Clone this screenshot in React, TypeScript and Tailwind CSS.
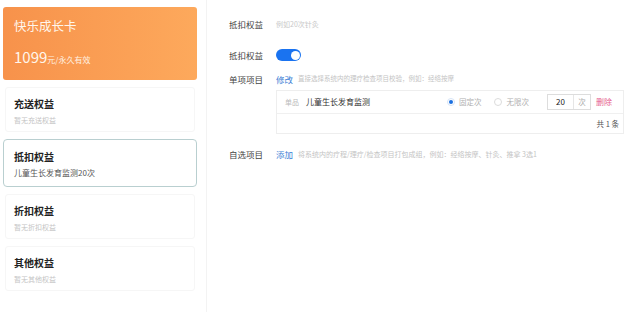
import React from 'react';

interface Benefit {
    title: string;
    desc: string;
    active?: boolean;
}

const benefits: Benefit[] = [
    { title: '充送权益', desc: '暂无充送权益' },
    { title: '抵扣权益', desc: '儿童生长发育监测20次', active: true },
    { title: '折扣权益', desc: '暂无折扣权益' },
    { title: '其他权益', desc: '暂无其他权益' },
];

const BenefitCard = ({ title, desc, active }: Benefit) => (
    <div
        className={
            active
                ? 'flex h-[48px] flex-col rounded-[4px] border border-[#b9cfd0] pl-[10px] pt-[9px]'
                : 'mx-[2px] flex h-[45px] flex-col rounded-[3px] border border-[#f6f6f6] pl-[8px] pt-[8px]'
        }
    >
        <div className="text-[10px] leading-[16px] font-bold text-[#222]">{title}</div>
        <div className={active ? 'mt-[1px] text-[8px] leading-[13px] text-[#555]' : 'mt-[2px] text-[7px] leading-[13px] text-[#c4c4c4]'}>
            {desc}
        </div>
    </div>
);

const Label = ({ children }: { children: React.ReactNode }) => (
    <div className="w-[47px] shrink-0 text-[8.5px] text-[#444]">{children}</div>
);

export default function App() {
    return (
        <div className="flex h-[312px] w-[640px] overflow-hidden bg-white font-['Noto_Sans_CJK_SC',sans-serif]">
            <aside className="flex w-[207px] shrink-0 flex-col gap-[7px] border-r border-[#f3f3f3] pt-[7px] pl-[3px] pr-[9px]">
                <div className="flex h-[73px] flex-col rounded-[3px] bg-gradient-to-r from-[#f7924b] to-[#fda95c] px-[11px] pt-[10px] text-white">
                    <div className="text-[12.5px] leading-[18px] text-[#fff6ec]">快乐成长卡</div>
                    <div className="mt-[12px] flex items-baseline">
                        <span className="text-[15px] leading-[20px] text-[#fff6ec]">1099</span>
                        <span className="text-[8px] text-[#fff1e2]">元/永久有效</span>
                    </div>
                </div>
                {benefits.map((b) => (
                    <BenefitCard key={b.title} {...b} />
                ))}
            </aside>

            <main className="flex flex-1 flex-col pl-[22px]">
                <div className="mt-[16px] flex h-[16px] items-center">
                    <Label>抵扣权益</Label>
                    <span className="text-[7px] text-[#c8c8c8]">例如20次针灸</span>
                </div>

                <div className="mt-[15px] flex h-[16px] items-center">
                    <Label>抵扣权益</Label>
                    <div className="flex h-[12px] w-[25px] items-center justify-end rounded-full bg-[#1a73f0] pr-[1.5px]">
                        <div className="h-[9px] w-[9px] rounded-full bg-white" />
                    </div>
                </div>

                <div className="mt-[8px] flex h-[16px] items-center">
                    <Label>单项项目</Label>
                    <span className="mr-[5px] text-[8.5px] text-[#3d7fd6]">修改</span>
                    <span className="text-[6.5px] text-[#c4c4c4]">直接选择系统内的理疗检查项目校验，例如：经络按摩</span>
                </div>

                <div className="mt-[3px] ml-[47px] w-[348px] border border-[#eeeeee]">
                    <div className="flex h-[23px] items-center border-b border-[#f0f0f0] pl-[8px]">
                        <span className="mr-[7px] text-[7px] text-[#bbb]">单品</span>
                        <span className="text-[8px] text-[#333]">儿童生长发育监测</span>
                        <div className="ml-[77px] flex items-center">
                            <div className="flex h-[8px] w-[8px] items-center justify-center rounded-full border border-[#d6e4f7]">
                                <div className="h-[4px] w-[4px] rounded-full bg-[#1a6fe0]" />
                            </div>
                            <span className="ml-[4px] text-[7.5px] text-[#b0b0b0]">固定次</span>
                            <div className="ml-[12px] h-[8px] w-[8px] rounded-full border border-[#dcdcdc]" />
                            <span className="ml-[5px] text-[7.5px] text-[#b0b0b0]">无限次</span>
                        </div>
                        <div className="ml-[18px] flex h-[16px] w-[44px] items-center border border-[#dddddd]">
                            <span className="w-[25px] text-center text-[8px] text-[#222]">20</span>
                            <div className="h-full w-px bg-[#e6e6e6]" />
                            <span className="flex-1 text-center text-[7.5px] text-[#aaa]">次</span>
                        </div>
                        <span className="ml-[5px] text-[8px] text-[#e6608e]">删除</span>
                    </div>
                    <div className="flex h-[19px] items-center justify-end pr-[4px]">
                        <span className="text-[7.5px] text-[#555]">共 1 条</span>
                    </div>
                </div>

                <div className="mt-[12px] flex h-[16px] items-center">
                    <Label>自选项目</Label>
                    <span className="mr-[5px] text-[8.5px] text-[#3d7fd6]">添加</span>
                    <span className="text-[7px] text-[#c4c4c4]">将系统内的疗程/理疗/检查项目打包成组，例如：经络按摩、针灸、推拿 3选1</span>
                </div>
            </main>
        </div>
    );
}
